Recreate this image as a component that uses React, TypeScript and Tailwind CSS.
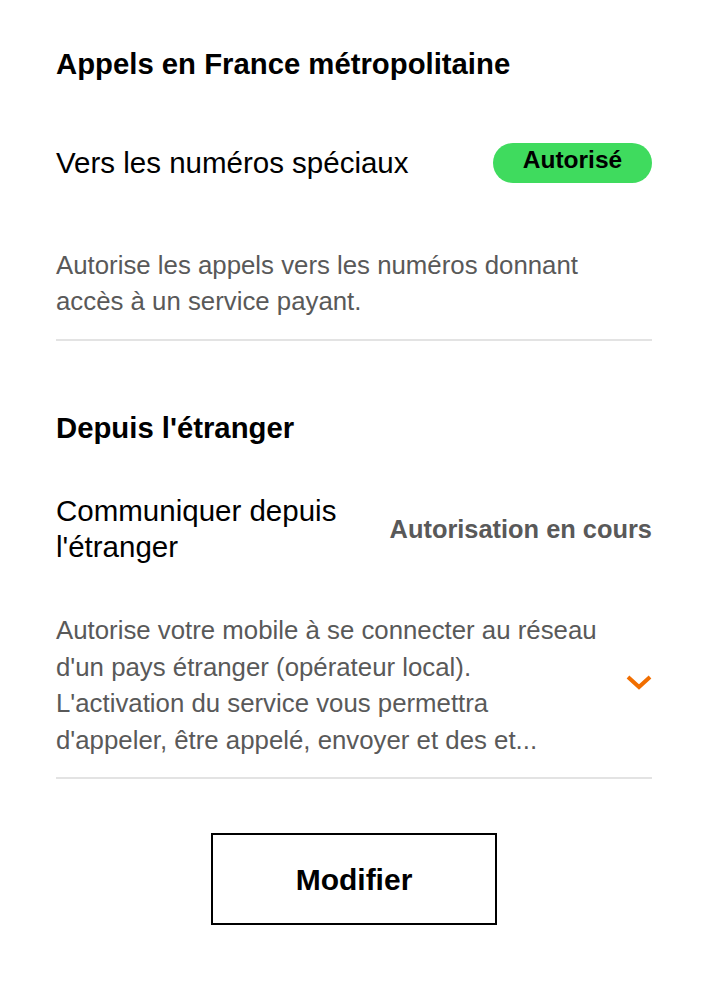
export default function App() {
  return (
    <div
      className="w-[708px] h-[999px] bg-white px-[56px] pt-[47px] text-black"
      style={{ fontFamily: '"Liberation Sans", Arial, sans-serif' }}
    >
      <h2 className="text-[29.3px] leading-[34px] font-bold">Appels en France métropolitaine</h2>

      <div className="mt-[62px] flex items-center justify-between h-[40px]">
        <span className="text-[29.5px] leading-[36px]">Vers les numéros spéciaux</span>
        <span className="h-[40px] w-[159px] rounded-full bg-[#3fdb5e] flex items-center justify-center text-[24.5px] font-bold leading-none pb-[5px]">
          Autorisé
        </span>
      </div>

      <p className="mt-[64px] text-[25.8px] leading-[36px] text-[#595959]">
        Autorise les appels vers les numéros donnant
        <br />
        accès à un service payant.
      </p>

      <div className="mt-[20px] h-[2px] bg-[#e3e3e3]" />

      <h2 className="mt-[70px] text-[29.3px] leading-[34px] font-bold">Depuis l'étranger</h2>

      <div className="mt-[48px] flex items-center justify-between">
        <span className="w-[300px] text-[29.5px] leading-[36px]">
          Communiquer depuis
          <br />
          l'étranger
        </span>
        <span className="text-[25.4px] font-bold leading-[36px] text-[#595959]">Autorisation en cours</span>
      </div>

      <div className="mt-[47px] flex items-center justify-between">
        <p className="text-[25.8px] leading-[36.5px] text-[#595959]">
          Autorise votre mobile à se connecter au réseau
          <br />
          d'un pays étranger (opérateur local).
          <br />
          L'activation du service vous permettra
          <br />
          d'appeler, être appelé, envoyer et des et...
        </p>
        <svg width="26" height="18" viewBox="0 0 26 18" className="shrink-0 mb-[4px]">
          <path d="M2 3 L13 13 L24 3" fill="none" stroke="#f16e00" strokeWidth="4" strokeLinecap="butt" strokeLinejoin="miter" />
        </svg>
      </div>

      <div className="mt-[19px] h-[2px] bg-[#e3e3e3]" />

      <div className="mt-[54px] flex justify-center">
        <button className="w-[286px] h-[92px] border-2 border-black bg-white text-[30px] font-bold">
          Modifier
        </button>
      </div>
    </div>
  );
}
